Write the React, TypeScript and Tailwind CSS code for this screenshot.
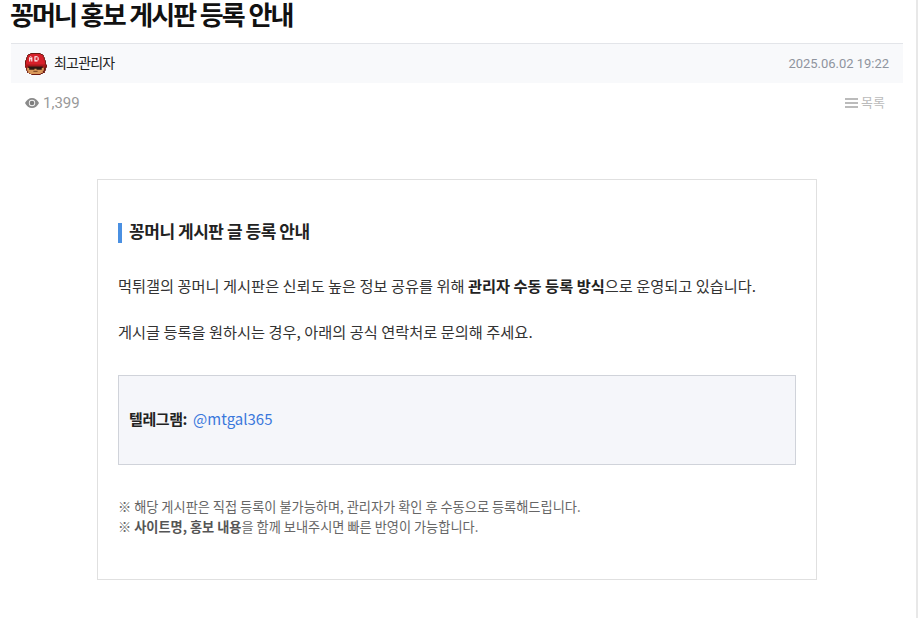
const baseFont = "font-['Roboto','Noto_Sans_CJK_KR',sans-serif]"
const bodyFont = "font-['Noto_Sans_CJK_KR',sans-serif]"

function AdAvatar() {
  return (
    <svg width="22" height="22" viewBox="1 0 21 21">
      <path d="M6 0h10v1h2v1h1v2h1v3h1v4h1v3h-1v3h-1v2h-2v1h-2v1H7v-1H5v-1H3v-2H2v-3H1v-3h0V7h1V4h1V2h1V1h2z" fill="#6e1a12" />
      <path d="M6 1h10v1h2v2h1v3h1v5H2V7h1V4h1V2h2z" fill="#d6202a" />
      <path d="M1 11h20v2h-1v1H2v-1H1z" fill="#a81a1c" />
      <path d="M3 14h16v3h-1v2h-2v1H6v-1H4v-2H3z" fill="#d9985a" />
      <path d="M4 13h14v1h-1v2h-5v-1h-2v1H5v-2H4z" fill="#2a1710" />
      <path d="M9 17h4v1H9z" fill="#7a4522" />
      <path d="M6 3h1v1H6zM5 4h1v4H5zM7 4h1v4H7zM6 5h1v1H6zM10 3h3v1h-3zM10 4h1v3h-1zM13 4h1v3h-1zM10 7h3v1h-3z" fill="#ffffff" />
    </svg>
  )
}

function EyeIcon() {
  return (
    <svg width="14" height="10" viewBox="0 0 14 10">
      <path d="M7 0C4 0 1.500 2 0 5c1.500 3 4 5 7 5s5.500-2 7-5c-1.500-3-4-5-7-5z" fill="#8a8a8a" />
      <circle cx="7" cy="5" r="3.200" fill="#f4f4f4" />
      <circle cx="7" cy="5" r="2.300" fill="#7d7d7d" />
    </svg>
  )
}

function BarsIcon() {
  return (
    <svg width="13" height="10" viewBox="0 0 13 10" fill="#bbbbbb">
      <rect width="13" height="2" />
      <rect y="4" width="13" height="2" />
      <rect y="8" width="13" height="2" />
    </svg>
  )
}

export default function App() {
  return (
    <div className={`h-[618px] w-[918px] overflow-hidden bg-white ${baseFont}`}>
      <div className="h-full w-[918px] border-r-2 border-[#e8e8e8]">
        <div className="pl-[11px] pr-[13px]">
          <h1 className="-ml-[1px] h-[43px] pt-[1px] text-[26px] leading-[30px] font-bold tracking-[-1.9px] text-[#111]">
            꽁머니 홍보 게시판 등록 안내
          </h1>

          <div className="flex h-[40px] items-center justify-between border-t border-[#e3e5e9] bg-[#f8f9fb] px-[14px]">
            <div className="flex items-center gap-[7px]">
              <AdAvatar />
              <span className="text-[14px] tracking-[-0.8px] text-[#222]">최고관리자</span>
            </div>
            <span className="text-[13px] tracking-[-0.02px] text-[#8f949e]">2025.06.02 19:22</span>
          </div>

          <div className="flex h-[40px] items-center justify-between pl-[14px] pr-[18px]">
            <div className="flex items-center gap-[4px] text-[15px] text-[#999]">
              <EyeIcon />
              <span>1,399</span>
            </div>
            <div className="flex items-center gap-[3px] text-[13px] text-[#bbb]">
              <BarsIcon />
              <span>목록</span>
            </div>
          </div>
        </div>

        <div className={`ml-[97px] mt-[56px] h-[401px] w-[720px] border border-[#e0e0e0] px-[20px] pt-[43px] ${bodyFont}`}>
          <h2 className="h-[20px] border-l-4 border-[#4a90e2] pl-[7px] text-[17px] leading-[16px] font-bold tracking-[-0.45px] text-[#222]">
            꽁머니 게시판 글 등록 안내
          </h2>

          <p className="mt-[31px] text-[15.25px] leading-[22px] text-[#333]">
            먹튀갤의 꽁머니 게시판은 신뢰도 높은 정보 공유를 위해{' '}
            <strong className="font-bold text-[#222]">관리자 수동 등록 방식</strong>으로 운영되고 있습니다.
          </p>
          <p className="mt-[24px] text-[15.25px] leading-[22px] text-[#333]">
            게시글 등록을 원하시는 경우, 아래의 공식 연락처로 문의해 주세요.
          </p>

          <div className="mt-[33px] flex h-[90px] items-center border border-[#d0d3da] bg-[#f5f6fa] px-[10px] pb-[2px] text-[15px]">
            <strong className="font-bold tracking-[-0.4px] text-[#222]">텔레그램:</strong>
            <span className="ml-[6px] text-[#3b78dc]">@mtgal365</span>
          </div>

          <p className="mt-[32px] text-[13.2px] leading-[20px] text-[#666]">
            ※ 해당 게시판은 직접 등록이 불가능하며, 관리자가 확인 후 수동으로 등록해드립니다.
            <br />※ <strong className="font-bold text-[#555]">사이트명, 홍보 내용</strong>을 함께 보내주시면 빠른 반영이 가능합니다.
          </p>
        </div>
      </div>
    </div>
  )
}
